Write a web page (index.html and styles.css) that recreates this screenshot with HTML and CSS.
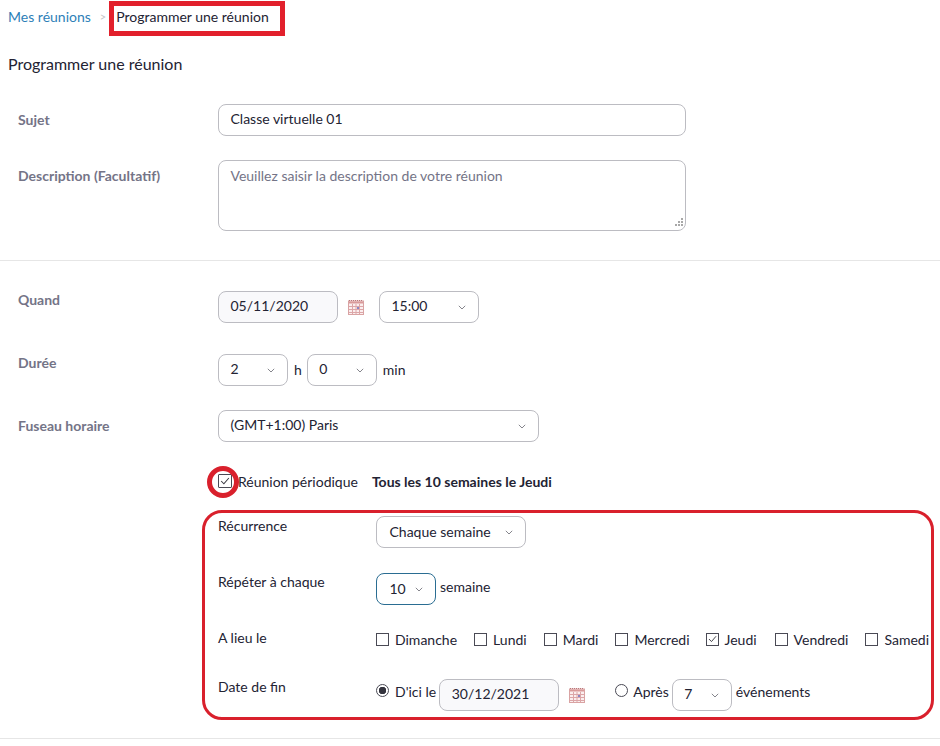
FILE: index.html
```html
<!DOCTYPE html>
<html lang="fr">
<head>
<meta charset="utf-8">
<title>Programmer une réunion</title>
<link rel="stylesheet" href="styles.css">
</head>
<body>
<svg class="defs" width="0" height="0" aria-hidden="true">
  <defs>
    <symbol id="cal" viewBox="0 0 16 16">
      <rect x="0.5" y="2" width="15" height="13.5" fill="#fbeeee" stroke="#d9a3a3"/>
      <path d="M1 1.5h14" stroke="#b9777a" stroke-width="1" stroke-dasharray="1 1" fill="none"/>
      <rect x="1" y="2.5" width="14" height="2" fill="#d99a9a"/>
      <path d="M1 7.5h14M1 10.5h14M1 13.5h14M4.5 5v10M8 5v10M11.5 5v10" stroke="#dca6a8" stroke-width="1" fill="none"/>
      <rect x="9" y="8" width="2" height="2" fill="#8a86c4"/>
    </symbol>
    <symbol id="chev" viewBox="0 0 8 5">
      <path d="M.8 .8L4 4l3.2-3.2" fill="none" stroke="#85858c" stroke-width="1"/>
    </symbol>
    <symbol id="tick" viewBox="0 0 14 14">
      <path d="M2.5 7l3.2 3.3L11.5 3.5" fill="none" stroke="#3a3a42" stroke-width="1.2"/>
    </symbol>
  </defs>
</svg>

<main class="page">
  <nav class="crumbs">
    <a class="crumb-link">Mes réunions</a>
    <span class="crumb-sep">&gt;</span>
    <span class="crumb-now">Programmer une réunion</span>
    <span class="mark-box"></span>
  </nav>
  <h1 class="title">Programmer une réunion</h1>

  <section class="group group-a">
    <div class="row row-subject">
      <div class="label label-mid">Sujet</div>
      <div class="field input input-wide">Classe virtuelle 01</div>
    </div>
    <div class="row row-desc">
      <div class="label label-mid">Description (Facultatif)</div>
      <div class="field textarea">Veuillez saisir la description de votre réunion
        <svg class="grip" width="12" height="12" viewBox="0 0 12 12" aria-hidden="true"><path d="M9 1h2v2H9zM6 4h2v2H6zM9 4h2v2H9zM3 7h2v2H3zM6 7h2v2H6zM9 7h2v2H9z" fill="#a8a8a8"/></svg>
      </div>
    </div>
  </section>

  <section class="group group-b">
    <div class="row row-when">
      <div class="label">Quand</div>
      <div class="controls">
        <div class="field date date-when">05/11/2020</div>
        <svg class="cal" width="16" height="16"><use href="#cal"/></svg>
        <div class="field select select-time"><span>15:00</span><svg class="chev"><use href="#chev"/></svg></div>
      </div>
    </div>
    <div class="row row-duration">
      <div class="label">Durée</div>
      <div class="controls tight">
        <div class="field select select-dur"><span>2</span><svg class="chev"><use href="#chev"/></svg></div>
        <span class="unit">h</span>
        <div class="field select select-dur"><span>0</span><svg class="chev"><use href="#chev"/></svg></div>
        <span class="unit">min</span>
      </div>
    </div>
    <div class="row row-tz">
      <div class="label label-mid">Fuseau horaire</div>
      <div class="field select select-tz"><span>(GMT+1:00) Paris</span><svg class="chev"><use href="#chev"/></svg></div>
    </div>
    <div class="periodic">
      <span class="check check-main"><svg width="14" height="14"><use href="#tick"/></svg></span>
      <span class="periodic-name">Réunion périodique</span>
      <strong class="periodic-sum">Tous les 10 semaines le Jeudi</strong>
      <span class="mark-ring"></span>
    </div>

    <div class="recur">
      <span class="mark-round"></span>
      <div class="recur-row rr-type">
        <div class="recur-label">Récurrence</div>
        <div class="field select select-type"><span>Chaque semaine</span><svg class="chev"><use href="#chev"/></svg></div>
      </div>
      <div class="recur-row rr-repeat">
        <div class="recur-label">Répéter à chaque</div>
        <div class="controls">
          <div class="field select select-rep"><span>10</span><svg class="chev"><use href="#chev"/></svg></div>
          <span class="unit">semaine</span>
        </div>
      </div>
      <div class="recur-row rr-days">
        <div class="recur-label">A lieu le</div>
        <div class="days">
          <span class="day day-1"><span class="check"></span>Dimanche</span>
          <span class="day day-2"><span class="check"></span>Lundi</span>
          <span class="day day-3"><span class="check"></span>Mardi</span>
          <span class="day day-4"><span class="check"></span>Mercredi</span>
          <span class="day day-5"><span class="check"><svg width="12" height="12"><use href="#tick"/></svg></span>Jeudi</span>
          <span class="day day-6"><span class="check"></span>Vendredi</span>
          <span class="day"><span class="check"></span>Samedi</span>
        </div>
      </div>
      <div class="recur-row rr-end">
        <div class="recur-label">Date de fin</div>
        <div class="controls end">
          <span class="radio radio-on"></span>
          <span class="end-text">D'ici le</span>
          <div class="field date date-end">30/12/2021</div>
          <svg class="cal cal-end" width="16" height="16"><use href="#cal"/></svg>
          <span class="radio radio-after"></span>
          <span class="end-text end-after">Après</span>
          <div class="field select select-count"><span>7</span><svg class="chev"><use href="#chev"/></svg></div>
          <span class="unit unit-events">événements</span>
        </div>
      </div>
    </div>
  </section>
</main>
</body>
</html>
```

FILE: styles.css
```css
* { box-sizing: border-box; }
html, body { margin: 0; padding: 0; background: #fff; }
body {
  width: 940px;
  height: 746px;
  overflow: hidden;
  font-family: Lato, "Open Sans", sans-serif;
  font-size: 14px;
  color: #232333;
}
.defs { position: absolute; }
.page { position: relative; }

.crumbs {
  position: relative;
  display: flex;
  align-items: center;
  height: 32px;
  padding-left: 8px;
}
.crumb-link { color: #2d7fb8; font-size: 14px; }
.crumb-sep { margin: 0 10px 0 9px; color: #c5c5c8; font-size: 11px; }
.crumb-now { color: #232333; font-size: 14px; }
.mark-box {
  position: absolute;
  left: 109px;
  top: 1px;
  width: 176px;
  height: 35px;
  border: 5px solid #e2202c;
}

.title {
  margin: 22px 0 0 8px;
  height: 20px;
  font-size: 16px;
  line-height: 20px;
  font-weight: 400;
  color: #232333;
}

.group { border-bottom: 1px solid #e6e6e6; }
.group-a { margin-top: 30px; padding-bottom: 29px; }
.group-b { padding-top: 30px; height: 478px; }

.row { display: flex; align-items: flex-start; }
.row-desc { margin-top: 24px; }
.row-duration { margin-top: 31px; }
.row-tz { margin-top: 24px; }

.label {
  width: 218px;
  padding-left: 18px;
  line-height: 18px;
  font-weight: 700;
  color: #747487;
}
.label-mid { padding-top: 7px; }

.field {
  border: 1px solid #bcbcc2;
  border-radius: 8px;
  background: #fff;
  height: 32px;
  line-height: 28px;
  font-size: 14px;
  color: #232333;
}
.input { padding-left: 11.5px; }
.input-wide { width: 468px; }
.textarea {
  position: relative;
  width: 468px;
  height: 71px;
  padding: 0 11.5px;
  line-height: 29px;
  color: #747487;
}
.grip { position: absolute; right: 1px; bottom: 1px; }

.controls { display: flex; align-items: center; }
.date { background: #f9f9fb; padding-left: 11.5px; }
.date-when { width: 120px; }
.cal { margin-left: 10px; flex: none; }
.select {
  display: flex;
  align-items: center;
  justify-content: space-between;
  padding: 0 12px 0 11.5px;
}
.select span { margin-top: -2px; }
.chev { width: 8px; height: 5px; flex: none; }
.select-time { width: 100px; margin-left: 15px; }
.select-dur { width: 70px; }
.unit { margin: -2px 0 0 6px; white-space: nowrap; }
.tight .unit + .select { margin-left: 5px; }
.select-tz { width: 321px; }

.periodic {
  position: relative;
  display: flex;
  align-items: center;
  height: 20px;
  margin: 29px 0 0 218px;
}
.check {
  display: inline-flex;
  align-items: center;
  justify-content: center;
  width: 13px;
  height: 13px;
  border: 1px solid #4a4a55;
  flex: none;
}
.check-main { width: 14px; height: 14px; border-radius: 1px; }
.periodic-name { margin-left: 6px; }
.periodic-sum { margin-left: 14px; font-weight: 700; }
.mark-ring {
  position: absolute;
  left: -11px;
  top: -5px;
  width: 32px;
  height: 32px;
  border: 5px solid #d9202c;
  border-radius: 50%;
}

.recur { position: relative; margin: 25px 0 0 218px; }
.mark-round {
  position: absolute;
  left: -16px;
  top: -6px;
  width: 732px;
  height: 210px;
  border: 3px solid #d9202c;
  border-radius: 20px;
}
.recur-row { display: flex; align-items: flex-start; }
.recur-label { width: 158px; line-height: 18px; }
.rr-repeat { margin-top: 25px; }
.rr-days { margin-top: 24px; }
.rr-end { margin-top: 31px; }
.rr-type .recur-label { margin-top: 1px; }
.rr-end .recur-label { margin-top: -1px; }

.select-type { width: 150px; padding-left: 12.5px; }
.select-type span { margin-top: 0; }
.select-rep { width: 60px; border-color: #2a6d92; padding-left: 12.5px; }
.select-rep span { margin-top: 0; }
.rr-repeat .unit { margin-left: 4px; margin-top: -6px; }

.days { display: flex; align-items: center; margin-top: 1px; height: 18px; }
.day { display: inline-flex; align-items: center; white-space: nowrap; }
.day .check { margin-right: 6px; }
.day-1 { margin-right: 17px; }
.day-2 { margin-right: 17px; }
.day-3 { margin-right: 17px; }
.day-4 { margin-right: 16px; }
.day-5 { margin-right: 18px; }
.day-6 { margin-right: 17px; }

.end { height: 32px; }
.radio {
  width: 13px;
  height: 13px;
  border: 1px solid #4a4a55;
  border-radius: 50%;
  flex: none;
  margin-top: -9px;
  background: #fff;
}
.radio-on { background: radial-gradient(circle, #33333d 0 3.5px, #fff 4px); }
.end-text { margin-left: 6px; margin-top: -8px; }
.date-end { width: 120px; margin-left: 3px; }
.cal-end { margin-left: 10px; }
.radio-after { margin-left: 30px; }
.end-after { margin-left: 5px; }
.select-count { width: 60px; margin-left: 3px; }
.unit-events { margin-left: 4px; margin-top: -7px; }
```
